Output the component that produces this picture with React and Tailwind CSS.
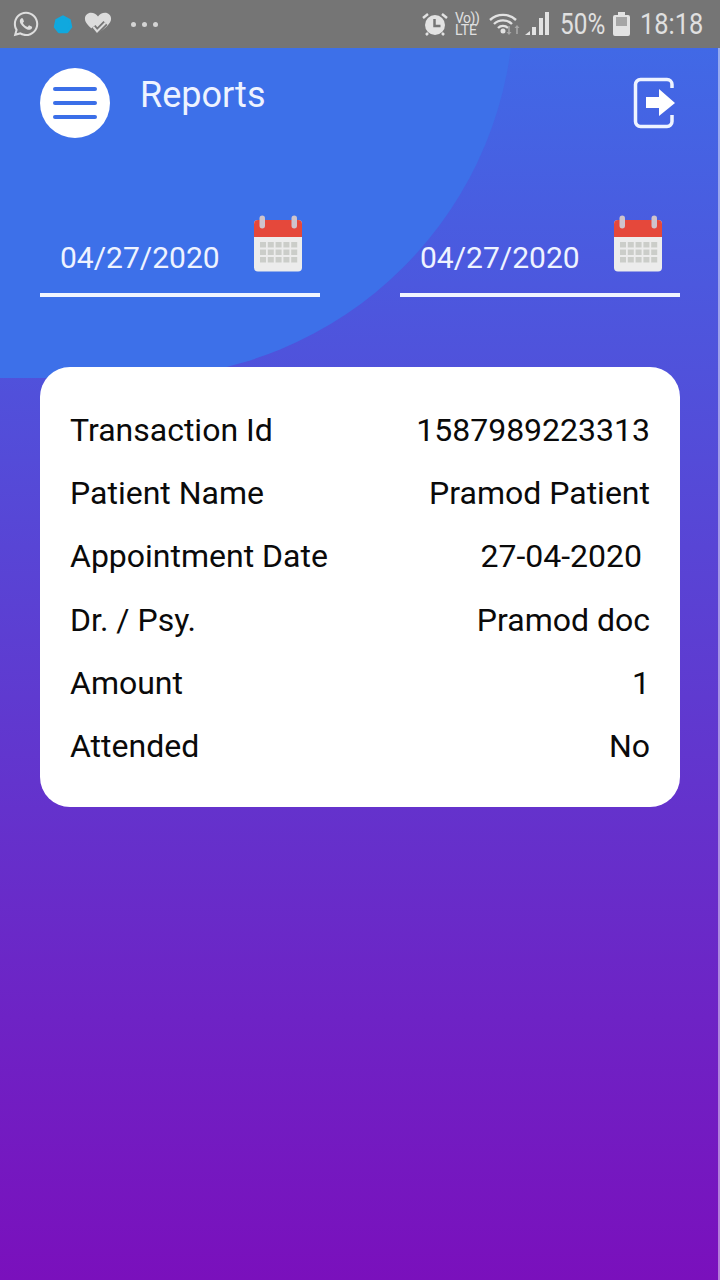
import React from 'react';
import { FaWhatsapp } from 'react-icons/fa';

const rows = [
    { label: 'Transaction Id', value: '1587989223313' },
    { label: 'Patient Name', value: 'Pramod Patient' },
    { label: 'Appointment Date', value: '27-04-2020', inset: true },
    { label: 'Dr. / Psy.', value: 'Pramod doc' },
    { label: 'Amount', value: '1' },
    { label: 'Attended', value: 'No' },
];

function CalendarIcon() {
    return (
        <svg width="50" height="58" viewBox="0 0 50 58" className="block">
            <rect x="1" y="5" width="48" height="51.500" rx="4" fill="#ececec" />
            <path d="M1 22V9a4 4 0 0 1 4-4h40a4 4 0 0 1 4 4v13z" fill="#e5483b" />
            <rect x="6.500" y="0.500" width="5.500" height="13" rx="2.750" fill="#cfc4cc" />
            <rect x="38.500" y="0.500" width="5.500" height="13" rx="2.750" fill="#cfc4cc" />
            {[27, 34.500, 42].map((y) =>
                [7, 14.800, 22.600, 30.400, 38.200].map((x) => (
                    <rect key={`${x}-${y}`} x={x} y={y} width="6" height="5.500" fill="#cbcdc9" />
                ))
            )}
        </svg>
    );
}

function DateField() {
    return (
        <div className="w-[280px] h-[82px] border-b-[4px] border-[#f1f5ff] flex justify-between pl-5 pr-[17px]">
            <span className="mt-[24px] text-[30px] leading-[38px] text-[#eef3ff]">04/27/2020</span>
            <CalendarIcon />
        </div>
    );
}

function StatusBar() {
    return (
        <div className="h-12 bg-[#757575] flex items-center justify-between pl-[12px] pr-[17px] text-[#e0e0e0]">
            <div className="flex items-center">
                <FaWhatsapp size={28} className="text-[#dedede]" />
                <svg width="20" height="20" viewBox="0 0 20 20" className="ml-[13px]">
                    <path d="M10 2.500l6.500 3.500 1.500 7-4 5h-8l-4-5 1.500-7z" fill="#10a8de" stroke="#10a8de" strokeWidth="2.500" strokeLinejoin="round" />
                </svg>
                <svg width="28" height="26" viewBox="0 0 30 26" className="ml-[11px]">
                    <path d="M15 23C8 18 1 13 1 7.500C1 3.500 4 1 7.500 1 10.500 1 13.500 2.500 15 5 16.500 2.500 19.500 1 22.500 1 26 1 29 3.500 29 7.500 29 13 22 18 15 23z" fill="#dcdcdc" />
                    <path d="M10 16l4 5 9-9" fill="none" stroke="#757575" strokeWidth="6" />
                    <path d="M10 16l4 5 9-9" fill="none" stroke="#dcdcdc" strokeWidth="2.200" />
                </svg>
                <div className="ml-[19px] flex gap-[6px]">
                    <span className="w-[5px] h-[5px] rounded-full bg-[#d4d4d4]" />
                    <span className="w-[5px] h-[5px] rounded-full bg-[#d4d4d4]" />
                    <span className="w-[5px] h-[5px] rounded-full bg-[#d4d4d4]" />
                </div>
            </div>
            <div className="flex items-center">
                <svg width="26" height="24" viewBox="0 0 26 24">
                    <circle cx="13" cy="13" r="10" fill="#e2e2e2" />
                    <path d="M1 6l5-4M25 6l-5-4M6 21l-2 2M20 21l2 2" stroke="#e2e2e2" strokeWidth="2.500" fill="none" />
                    <path d="M12.500 7v7h6" stroke="#757575" strokeWidth="2.500" fill="none" />
                </svg>
                <div className="ml-[7px] w-[24px] flex flex-col text-[14px] whitespace-nowrap">
                    <span className="h-[12px] leading-[12px] tracking-[-0.500px]">Vo))</span>
                    <span className="h-[12px] leading-[12px]">LTE</span>
                </div>
                <svg width="32" height="24" viewBox="0 0 32 24" className="ml-[10px]">
                    <path d="M1 8A19 19 0 0 1 27 8M5 12A13 13 0 0 1 23 12M9 16A7 7 0 0 1 19 16" fill="none" stroke="#e2e2e2" strokeWidth="2.400" />
                    <circle cx="14" cy="19" r="2.500" fill="#e2e2e2" />
                    <path d="M20 14v7M28 22v-7" stroke="#a8a8a8" strokeWidth="1.600" />
                    <path d="M17.500 20l2.500 3 2.500-3zM25.500 16l2.500-3 2.500 3z" fill="#a8a8a8" />
                </svg>
                <svg width="24" height="24" viewBox="0 0 24 24" className="ml-[4px]">
                    <path d="M0 23l5-4v4z" fill="#e2e2e2" />
                    <rect x="7" y="15" width="4" height="8" fill="#e2e2e2" />
                    <rect x="14" y="6" width="4" height="17" fill="#e2e2e2" />
                    <rect x="20" y="0" width="4" height="23" fill="#e2e2e2" />
                </svg>
                <span className="ml-[11px] w-[45px] text-[29px] leading-none whitespace-nowrap origin-left scale-x-[.84]">50%</span>
                <svg width="17" height="24" viewBox="0 0 17 24" className="ml-[8px]">
                    <path d="M5 0h7v3h3a2 2 0 0 1 2 2v17a2 2 0 0 1-2 2H2a2 2 0 0 1-2-2V5a2 2 0 0 1 2-2h3z" fill="#e2e2e2" />
                    <rect x="3" y="5" width="11" height="9" fill="#a5a5a5" />
                </svg>
                <span className="ml-[10px] w-[63px] text-[29px] leading-none whitespace-nowrap origin-left scale-x-[.875]">18:18</span>
            </div>
        </div>
    );
}

export default function App() {
    return (
        <div className="relative w-[720px] h-[1280px] overflow-hidden bg-[#757575]" style={{ fontFamily: 'Roboto, sans-serif' }}>
            <StatusBar />
            <div className="relative h-[1232px] overflow-hidden bg-linear-to-b/srgb from-[#4169e6] to-[#7a10bc]">
                <div className="absolute left-[-474px] top-[-426px] w-[988px] h-[756px] rounded-full bg-[#3d70e9]" />
                <div className="absolute right-0 top-0 bottom-0 w-[2px] bg-white/45" />

                <div className="relative px-10">
                    <div className="pt-5 flex items-start justify-between">
                        <div className="flex items-start">
                            <div className="w-[70px] h-[70px] rounded-full bg-white flex flex-col items-center justify-center gap-[9.700px]">
                                <span className="w-[44px] h-[4px] rounded-full bg-[#3b6fe8]" />
                                <span className="w-[44px] h-[4px] rounded-full bg-[#3b6fe8]" />
                                <span className="w-[44px] h-[4px] rounded-full bg-[#3b6fe8]" />
                            </div>
                            <span className="ml-[30px] mt-1 text-[36px] leading-[46px] text-[#eef3ff]">Reports</span>
                        </div>
                        <svg width="44" height="52" viewBox="0 0 44 52" className="mt-[9px] mr-[4px]">
                            <path d="M40 11V7.500a5 5 0 0 0-5-5H8.500a5 5 0 0 0-5 5v37a5 5 0 0 0 5 5H35a5 5 0 0 0 5-5V38" fill="none" stroke="#eef3ff" strokeWidth="3.500" />
                            <path d="M14 20h13v-8l16 14-16 13v-8H14z" fill="#ffffff" />
                        </svg>
                    </div>

                    <div className="mt-[77px] flex justify-between">
                        <DateField />
                        <DateField />
                    </div>

                    <div className="mt-[70px] h-[440px] rounded-[30px] bg-white pt-[31px] px-[30px] text-[#0a0a0a]">
                        {rows.map((row) => (
                            <div key={row.label} className="h-[63.300px] flex items-center justify-between text-[32px]">
                                <span>{row.label}</span>
                                <span className={row.inset ? 'pr-2' : ''}>{row.value}</span>
                            </div>
                        ))}
                    </div>
                </div>
            </div>
        </div>
    );
}
